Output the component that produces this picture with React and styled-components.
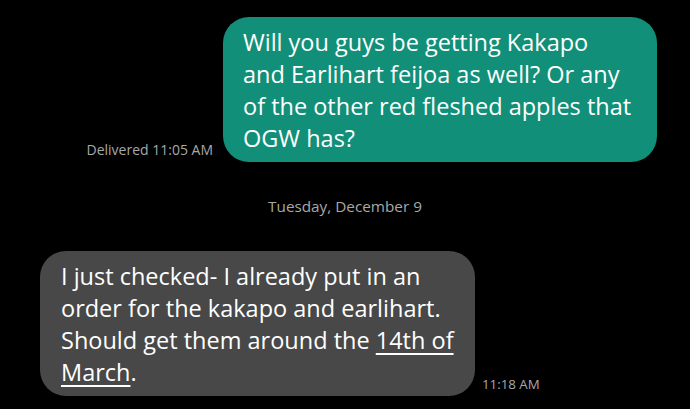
import React from 'react';
import styled, { createGlobalStyle } from 'styled-components';

const GlobalStyle = createGlobalStyle`
  html, body {
    margin: 0;
    padding: 0;
    background: #000;
  }
  body {
    font-family: "Open Sans", Roboto, sans-serif;
    -webkit-font-smoothing: antialiased;
  }
`;

const Screen = styled.div`
  width: 690px;
  height: 409px;
  background: #000;
  overflow: hidden;
  display: flex;
  flex-direction: column;
  padding-top: 17px;
  box-sizing: border-box;
`;

const Row = styled.div`
  display: flex;
  align-items: flex-end;
  justify-content: ${p => (p.$out ? 'flex-end' : 'flex-start')};
  gap: ${p => (p.$out ? '10px' : '7px')};
  padding: ${p => (p.$out ? '0 33px 0 0' : '0 0 0 40px')};
`;

const Bubble = styled.div`
  background: ${p => (p.$out ? '#118f78' : '#484848')};
  color: #fff;
  border-radius: 26px;
  padding: ${p => (p.$out ? '9px 20px 8px 20px' : '9px 21px 8px 21px')};
  width: ${p => (p.$out ? '394px' : '393px')};
  font-size: 23.5px;
  line-height: 32px;
`;

const Line = styled.span`
  display: block;
  white-space: nowrap;
`;

const Link = styled.span`
  text-decoration: underline;
  text-underline-offset: 4px;
  text-decoration-thickness: 1.5px;
`;

const Stamp = styled.div`
  color: #a8a8a8;
  font-size: ${p => p.$size || '14px'};
  line-height: 18px;
  padding-bottom: 3px;
  white-space: nowrap;
`;

const DateSep = styled.div`
  color: #a8a8a8;
  font-size: 15.3px;
  line-height: 18px;
  text-align: center;
  margin: 35px 0 36px;
`;

const outLines = [
  'Will you guys be getting Kakapo',
  'and Earlihart feijoa as well? Or any',
  'of the other red fleshed apples that',
  'OGW has?',
];

export default function App() {
  return (
    <>
      <GlobalStyle />
      <Screen>
        <Row $out>
          <Stamp>Delivered 11:05 AM</Stamp>
          <Bubble $out>
            {outLines.map(l => (
              <Line key={l}>{l}</Line>
            ))}
          </Bubble>
        </Row>

        <DateSep>Tuesday, December 9</DateSep>

        <Row>
          <Bubble>
            <Line>I just checked- I already put in an</Line>
            <Line>order for the kakapo and earlihart.</Line>
            <Line>
              Should get them around the <Link>14th of</Link>
            </Line>
            <Line>
              <Link>March</Link>.
            </Line>
          </Bubble>
          <Stamp $size="13.3px">11:18 AM</Stamp>
        </Row>
      </Screen>
    </>
  );
}
